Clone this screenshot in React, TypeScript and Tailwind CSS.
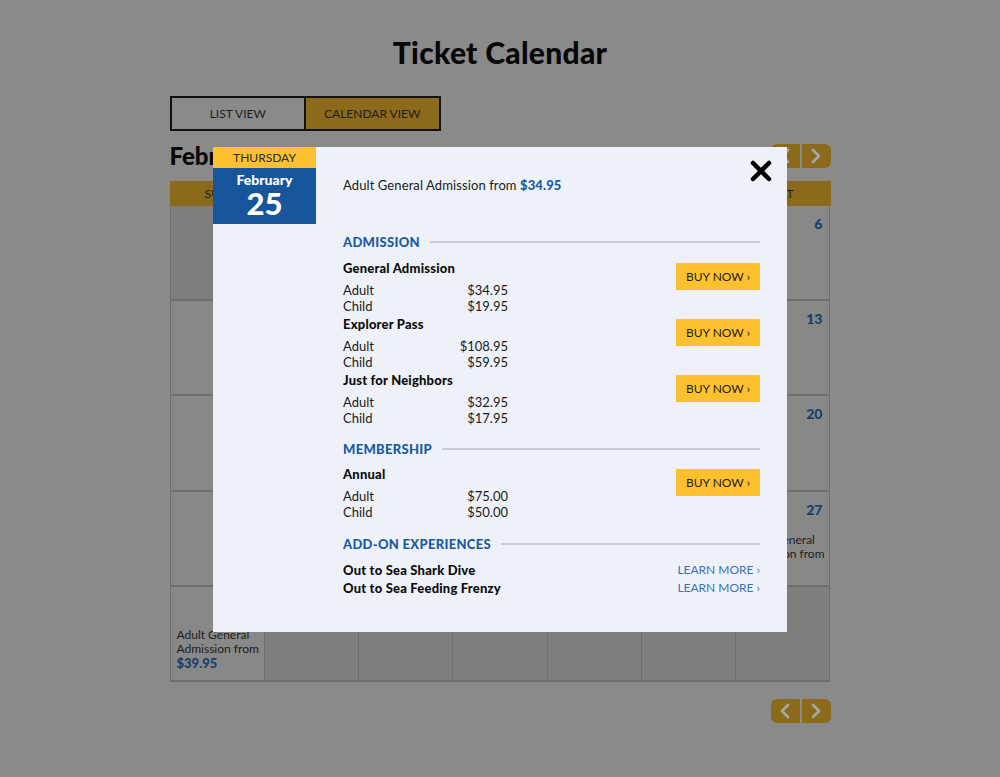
import React from "react";

const GOLD_DIM = "bg-[#8b6a1b]";

function Chevron({ dir }: { dir: "left" | "right" }) {
  return (
    <svg width="12" height="16" viewBox="0 0 12 16" fill="none">
      {dir === "left" ? (
        <polyline points="9,2 3,8 9,14" stroke="#a8a8a8" strokeWidth="2.6" strokeLinecap="round" strokeLinejoin="round" />
      ) : (
        <polyline points="3,2 9,8 3,14" stroke="#a8a8a8" strokeWidth="2.6" strokeLinecap="round" strokeLinejoin="round" />
      )}
    </svg>
  );
}

function NavButtons() {
  return (
    <div className="flex gap-[2px]">
      <div className={`flex h-[24px] w-[29px] items-center justify-center rounded-l-[6px] ${GOLD_DIM}`}>
        <Chevron dir="left" />
      </div>
      <div className={`flex h-[24px] w-[29px] items-center justify-center rounded-r-[6px] ${GOLD_DIM}`}>
        <Chevron dir="right" />
      </div>
    </div>
  );
}

type Cell = { day?: number; disabled?: boolean; price?: string };

const weeks: Cell[][] = [
  [{ disabled: true }, { day: 1 }, { day: 2 }, { day: 3 }, { day: 4 }, { day: 5 }, { day: 6 }],
  [{ day: 7 }, { day: 8 }, { day: 9 }, { day: 10 }, { day: 11 }, { day: 12 }, { day: 13 }],
  [{ day: 14 }, { day: 15 }, { day: 16 }, { day: 17 }, { day: 18 }, { day: 19 }, { day: 20 }],
  [
    { day: 21 },
    { day: 22 },
    { day: 23 },
    { day: 24 },
    { day: 25, price: "$34.95" },
    { day: 26, price: "$39.95" },
    { day: 27, price: "$39.95" },
  ],
  [
    { day: 28, price: "$39.95" },
    { disabled: true },
    { disabled: true },
    { disabled: true },
    { disabled: true },
    { disabled: true },
    { disabled: true },
  ],
];

const days = ["SUN", "MON", "TUE", "WED", "THU", "FRI", "SAT"];

function CalendarCell({ cell }: { cell: Cell }) {
  return (
    <div
      className={`flex h-[95.2px] flex-col justify-between border-r border-b-2 border-[#6e6e6e] ${
        cell.disabled ? "bg-[#7e7e7e]" : "bg-[#888888]"
      }`}
    >
      <div className="pr-[7px] pt-[10px] text-right text-[14px] font-black leading-[16px] text-[#173f6a]">
        {cell.day ?? ""}
      </div>
      {cell.price ? (
        <div className="pb-[10px] pl-[6px] text-[12px] leading-[14px] text-[#1c1c1c]">
          <div>Adult General</div>
          <div>Admission from</div>
          <div className="text-[13px] font-black text-[#173f6a]">{cell.price}</div>
        </div>
      ) : null}
    </div>
  );
}

function SectionHeading({ label }: { label: string }) {
  return (
    <div className="flex items-center gap-[10px]">
      <div className="text-[13px] font-black uppercase leading-[18px] tracking-[0.3px] text-[#1a5aa3]">{label}</div>
      <div className="h-[2px] flex-1 bg-[#c9cdd3]" />
    </div>
  );
}

function BuyNow() {
  return (
    <div className="mt-[4px] flex h-[27px] w-[84px] items-center justify-center bg-[#fdc12f] text-[12px] text-[#1d1d1d]">
      BUY NOW ›
    </div>
  );
}

function Item({ title, rows }: { title: string; rows: [string, string][] }) {
  return (
    <div className="flex justify-between">
      <div>
        <div className="text-[13px] font-black leading-[18px] tracking-[0.2px] text-[#0d0d0d]">{title}</div>
        <div className="mt-[5px]">
          {rows.map(([label, price]) => (
            <div key={label} className="flex w-[165px] justify-between text-[13px] leading-[16px] text-[#1a1a1a]">
              <span>{label}</span>
              <span>{price}</span>
            </div>
          ))}
        </div>
      </div>
      <BuyNow />
    </div>
  );
}

function Modal() {
  return (
    <div className="absolute left-[213px] top-[147px] h-[485px] w-[574px] bg-[#eef2f8]">
      <div className="absolute left-0 top-0 w-[103px]">
        <div className="flex h-[21px] items-center justify-center bg-[#fdc12f] text-[12px] text-[#2a2a2a]">
          THURSDAY
        </div>
        <div className="flex h-[56px] flex-col items-center bg-[#17569c] pt-[3px] text-white">
          <div className="text-[14px] font-black leading-[18px]">February</div>
          <div className="text-[31px] font-black leading-[29px]">25</div>
        </div>
      </div>
      <div className="absolute right-[15px] top-[13px]">
        <svg width="22" height="22" viewBox="0 0 22 22">
          <line x1="3" y1="3" x2="19" y2="19" stroke="#000" strokeWidth="4.5" strokeLinecap="round" />
          <line x1="19" y1="3" x2="3" y2="19" stroke="#000" strokeWidth="4.5" strokeLinecap="round" />
        </svg>
      </div>
      <div className="pl-[130px] pr-[27px] pt-[29px]">
        <div className="text-[13px] leading-[18px] tracking-[0.1px] text-[#1a1a1a]">
          Adult General Admission from <span className="font-black text-[#1a5aa3]">$34.95</span>
        </div>
        <div className="mt-[39px]">
          <SectionHeading label="Admission" />
          <div className="mt-[8px] flex flex-col gap-[1px]">
            <Item title="General Admission" rows={[["Adult", "$34.95"], ["Child", "$19.95"]]} />
            <Item title="Explorer Pass" rows={[["Adult", "$108.95"], ["Child", "$59.95"]]} />
            <Item title="Just for Neighbors" rows={[["Adult", "$32.95"], ["Child", "$17.95"]]} />
          </div>
        </div>
        <div className="mt-[14px]">
          <SectionHeading label="Membership" />
          <div className="mt-[7px]">
            <Item title="Annual" rows={[["Adult", "$75.00"], ["Child", "$50.00"]]} />
          </div>
        </div>
        <div className="mt-[15px]">
          <SectionHeading label="Add-on Experiences" />
          <div className="mt-[8px]">
            {["Out to Sea Shark Dive", "Out to Sea Feeding Frenzy"].map((t) => (
              <div key={t} className="flex items-center justify-between leading-[18px]">
                <span className="text-[13px] font-black tracking-[0.2px] text-[#0d0d0d]">{t}</span>
                <span className="text-[12px] text-[#3a72b5]">LEARN MORE ›</span>
              </div>
            ))}
          </div>
        </div>
      </div>
    </div>
  );
}

export default function App() {
  return (
    <div className="relative h-[777px] w-full overflow-hidden bg-[#8a8a8a] font-['Lato','Noto_Sans',sans-serif]">
      <div className="mx-auto w-[661px] pt-[34px]">
        <h1 className="text-center text-[30px] font-black leading-[36px] tracking-[0.3px] text-[#070707]">
          Ticket Calendar
        </h1>
        <div className="mt-[26px] flex h-[35px] w-[271px] border-2 border-[#111]">
          <div className="flex flex-1 items-center justify-center border-r-2 border-[#111] text-[12px] text-[#1d1d1d]">
            LIST VIEW
          </div>
          <div className={`flex flex-1 items-center justify-center text-[12px] text-[#1d1d1d] ${GOLD_DIM}`}>
            CALENDAR VIEW
          </div>
        </div>
        <div className="mt-[13px] flex h-[24px] items-center justify-between">
          <div className="text-[24px] font-black leading-[24px] text-[#070707]">February 2021</div>
          <NavButtons />
        </div>
        <div className={`mt-[13px] grid h-[25px] grid-cols-7 ${GOLD_DIM}`}>
          {days.map((d) => (
            <div key={d} className="flex items-center justify-center text-[12px] text-[#1d1d1d]">
              {d}
            </div>
          ))}
        </div>
        <div className="grid grid-cols-7 border-l border-[#6e6e6e]">
          {weeks.flat().map((c, i) => (
            <CalendarCell key={i} cell={c} />
          ))}
        </div>
        <div className="mt-[17px] flex justify-end">
          <NavButtons />
        </div>
      </div>
      <Modal />
    </div>
  );
}
